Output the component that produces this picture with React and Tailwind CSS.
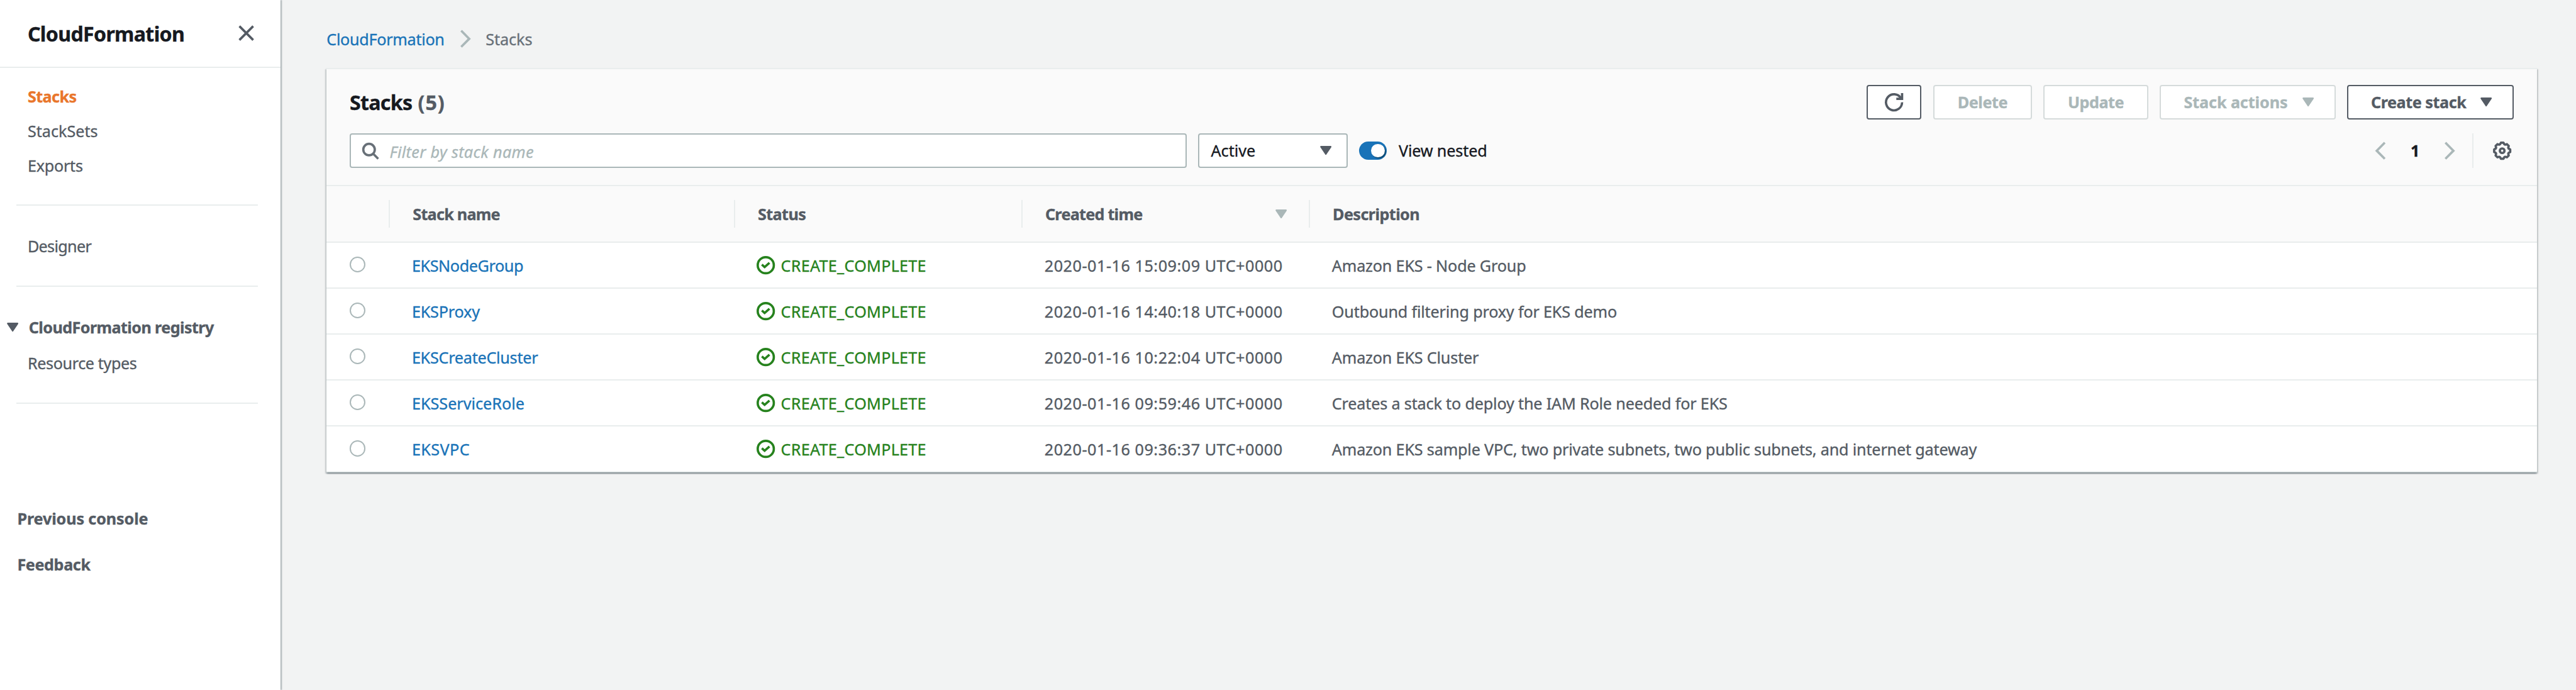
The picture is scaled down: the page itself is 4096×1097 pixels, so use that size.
import React from "react";

const Caret = ({ className = "" }) => (
  <svg viewBox="0 0 20 16" className={`h-[14.6px] w-[18.3px] shrink-0 ${className}`}>
    <path d="M1.5 1.4H18.5L10 14.2Z" fill="currentColor" stroke="currentColor" strokeWidth="2.6" strokeLinejoin="round" />
  </svg>
);

const Icon = ({ className = "", children }) => (
  <svg viewBox="0 0 16 16" fill="none" stroke="currentColor" strokeWidth="2" className={`size-[29.26px] shrink-0 overflow-visible ${className}`}>
    {children}
  </svg>
);

const gearPath = (() => {
  const points = [];
  for (let tooth = 0; tooth < 8; tooth++) {
    [
      [-18.5, 5.9],
      [-9, 7.05],
      [9, 7.05],
      [18.5, 5.9],
    ].forEach(([offset, radius]) => {
      const angle = ((tooth * 45 + offset) * Math.PI) / 180;
      points.push(`${(8 + radius * Math.sin(angle)).toFixed(2)} ${(8 - radius * Math.cos(angle)).toFixed(2)}`);
    });
  }
  return `M${points.join("L")}Z`;
})();

const NavItem = ({ className = "", children }) => (
  <a className={`flex h-[54.86px] items-center pl-[43.9px] ${className}`}>{children}</a>
);

const Divider = ({ className = "" }) => <div className={`ml-[25.6px] h-[2px] w-[384px] bg-[#e9eded] ${className}`} />;

function Sidebar() {
  return (
    <aside className="relative z-10 h-full w-[446.2px] shrink-0 bg-white text-[#545b64] shadow-[1.8px_0_1.8px_0_rgba(0,28,36,0.3)]">
      <div className="flex h-[107.9px] items-center justify-between border-b-2 border-[#e9eded] pr-[40.2px] pl-[43.9px]">
        <h1 className="pt-[2px] text-[32.2px] font-bold tracking-[-0.7px] text-[#16191f]">CloudFormation</h1>
        <Icon><path d="M2 2L14 14M14 2L2 14" /></Icon>
      </div>
      <nav className="pt-[17.3px]">
        <NavItem className="font-bold tracking-[-0.6px] text-[#e9762b]">Stacks</NavItem>
        <NavItem className="pt-[1px]">StackSets</NavItem>
        <NavItem className="pt-[1px] tracking-[-0.25px]">Exports</NavItem>
        <Divider className="mt-[35.7px]" />
        <NavItem className="mt-[35.8px] tracking-[-0.7px]">Designer</NavItem>
        <Divider className="mt-[35.4px]" />
        <div className="mt-[37.4px] flex h-[54.86px] items-center pl-[11px] font-bold tracking-[-0.6px]">
          <Caret className="mr-[16.5px]" />
          CloudFormation registry
        </div>
        <NavItem className="mt-[1.8px] tracking-[-0.4px]">Resource types</NavItem>
        <Divider className="mt-[35.7px]" />
        <div className="mt-[145.4px] pl-[27.4px] font-bold">
          <a className="flex h-[73.14px] items-center tracking-[-0.13px]">Previous console</a>
          <a className="flex h-[73.14px] items-center tracking-[-0.4px]">Feedback</a>
        </div>
      </nav>
    </aside>
  );
}

const Button = ({ disabled, className = "", children }) => (
  <button
    className={`flex h-[54.9px] items-center rounded-[4px] border-2 bg-white font-bold ${
      disabled ? "border-[#d5dbdb] text-[#aab7b8]" : "border-[#545b64] text-[#545b64]"
    } ${className}`}
  >
    {children}
  </button>
);

const HeadCell = ({ className = "", children }) => (
  <div className={`flex h-[43.9px] items-center border-l-2 border-[#e9eded] font-bold ${className}`}>{children}</div>
);

const stacks = [
  { name: "EKSNodeGroup", created: "2020-01-16 15:09:09 UTC+0000", description: "Amazon EKS - Node Group", tracking: "tracking-[-0.4px]" },
  { name: "EKSProxy", created: "2020-01-16 14:40:18 UTC+0000", description: "Outbound filtering proxy for EKS demo", tracking: "tracking-[-0.18px]" },
  { name: "EKSCreateCluster", created: "2020-01-16 10:22:04 UTC+0000", description: "Amazon EKS Cluster", tracking: "tracking-[-0.26px]" },
  { name: "EKSServiceRole", created: "2020-01-16 09:59:46 UTC+0000", description: "Creates a stack to deploy the IAM Role needed for EKS", tracking: "tracking-[0px]" },
  { name: "EKSVPC", created: "2020-01-16 09:36:37 UTC+0000", description: "Amazon EKS sample VPC, two private subnets, two public subnets, and internet gateway", tracking: "tracking-[0.4px]" },
];

const columns = "grid grid-cols-[98.8px_548.6px_457.1px_457.1px_1fr] items-center";

function StacksTable() {
  return (
    <div>
      <div className={`${columns} h-[89.5px] border-b-2 border-[#e9eded] bg-[#fafafa]`}>
        <div />
        <HeadCell className="pl-[36.2px] tracking-[-0.75px]">Stack name</HeadCell>
        <HeadCell className="pl-[36.3px] tracking-[-0.6px]">Status</HeadCell>
        <HeadCell className="justify-between pr-[34.7px] pl-[36.2px] tracking-[-0.75px]">
          Created time
          <Caret className="text-[#aab7b8]" />
        </HeadCell>
        <HeadCell className="pl-[36.2px] tracking-[-0.58px]">Description</HeadCell>
      </div>
      {stacks.map((stack) => (
        <div key={stack.name} className={`${columns} h-[73.14px] border-b-2 border-[#e9eded] bg-white whitespace-nowrap`}>
          <div className="mb-[1.8px] ml-[36.6px] size-[25.6px] rounded-full border-2 border-[#aab7b8] bg-white" />
          <a className={`pt-[0.8px] pl-[36.8px] text-[#1973b8] ${stack.tracking}`}>{stack.name}</a>
          <div className="flex items-center pt-[0.8px] pl-[36.6px] tracking-[0.25px] text-[#26821d]">
            <Icon className="mr-[9.1px]">
              <circle cx="8" cy="8" r="7" />
              <path d="M4.6 7.4L7 9.6L11.2 5.9" />
            </Icon>
            CREATE_COMPLETE
          </div>
          <div className="pt-[0.8px] pl-[37px] tracking-[0.52px]">{stack.created}</div>
          <div className="pt-[0.8px] pl-[37px] tracking-[-0.18px]">{stack.description}</div>
        </div>
      ))}
    </div>
  );
}

export default function App() {
  return (
    <div className="flex h-[1097px] w-[4096px] overflow-hidden bg-[#f2f3f3] font-['Noto_Sans',sans-serif] text-[25.2px] leading-[36px] text-[#545b64] [-webkit-text-stroke:0.35px_currentColor]">
      <Sidebar />
      <main className="min-w-0 flex-1 pt-[41.5px] pr-[62.2px] pl-[73.1px]">
        <div className="mb-[26.4px] flex h-[40px] items-center">
          <a className="w-[206.6px] tracking-[-0.3px] text-[#1973b8]">CloudFormation</a>
          <Icon className="mr-[17.2px] text-[#aab7b8]"><path d="M4 1L11 8L4 15" /></Icon>
          <span className="tracking-[-0.1px] text-[#687078]">Stacks</span>
        </div>

        <section className="border-t-2 border-[#e9eded] bg-white shadow-[0_1.8px_1.8px_0_rgba(0,28,36,0.3),1.8px_1.8px_1.8px_0_rgba(0,28,36,0.15),-1.8px_1.8px_1.8px_0_rgba(0,28,36,0.15)]">
          <div className="border-b-2 border-[#e9eded] bg-[#fafafa] px-[36.6px] pt-[25.4px] pb-[27.2px]">
            <div className="flex items-center gap-[18.3px]">
              <h2 className="flex flex-1 text-[32.2px] font-bold text-[#16191f]">
                <span className="w-[108.6px] tracking-[-0.7px]">Stacks</span>
                <span className="tracking-[1px] text-[#545b64]">(5)</span>
              </h2>
              <Button className="w-[87.8px] justify-center">
                <Icon>
                  <path d="M15 8A7 7 0 1 1 14 4.4" />
                  <path d="M10 5H15V0" />
                </Icon>
              </Button>
              <Button disabled className="w-[157.3px] justify-center pb-[1px] tracking-[-0.45px]">Delete</Button>
              <Button disabled className="w-[166.4px] justify-center pb-[1px] tracking-[-0.45px]">Update</Button>
              <Button disabled className="w-[279.8px] justify-between pr-[32.7px] pl-[36.4px] tracking-[-0.1px]">
                <span className="pb-[1px]">Stack actions</span>
                <Caret />
              </Button>
              <Button className="w-[265.1px] justify-between pr-[32.7px] pl-[35.8px] tracking-[-0.45px]">
                <span className="pb-[1px]">Create stack</span>
                <Caret />
              </Button>
            </div>

            <div className="mt-[21.9px] flex items-center">
              <div className="flex h-[54.9px] w-[1331.2px] items-center rounded-[4px] border-2 border-[#aab7b8] bg-white pl-[16.3px]">
                <Icon className="mr-[16.1px] text-[#687078]">
                  <circle cx="7" cy="7" r="5" />
                  <path d="M10.5 10.5L15 15" />
                </Icon>
                <span className="pt-[2px] tracking-[0.35px] text-[#aab7b8] italic">Filter by stack name</span>
              </div>
              <div className="ml-[18.3px] flex h-[54.9px] w-[237.7px] items-center justify-between rounded-[4px] border-2 border-[#aab7b8] bg-white pr-[23.6px] pl-[18.1px] text-[#16191f]">
                <span className="pb-[1px]">Active</span>
                <Caret className="text-[#545b64]" />
              </div>
              <div className="ml-[18.3px] h-[29.3px] w-[43.9px] rounded-full bg-[#1973b8] pt-[3.7px] pl-[18.3px]">
                <div className="size-[21.9px] rounded-full bg-white shadow-[1.8px_1.8px_1.8px_0_rgba(0,28,36,0.5)]" />
              </div>
              <span className="ml-[18.7px] pb-[1px] tracking-[-0.15px] text-[#16191f]">View nested</span>
              <div className="ml-auto flex items-center pr-[3.7px]">
                <Icon className="text-[#aab7b8]"><path d="M12 1L5 8L12 15" /></Icon>
                <span className="w-[80.8px] pb-[1px] text-center font-bold text-[#16191f]">1</span>
                <Icon className="text-[#aab7b8]"><path d="M4 1L11 8L4 15" /></Icon>
                <div className="mr-[31px] ml-[21.5px] h-[54.9px] w-[2px] bg-[#e9eded]" />
                <Icon>
                  <path d={gearPath} strokeLinejoin="round" />
                  <circle cx="8" cy="8" r="2" />
                </Icon>
              </div>
            </div>
          </div>
          <StacksTable />
        </section>
      </main>
    </div>
  );
}
